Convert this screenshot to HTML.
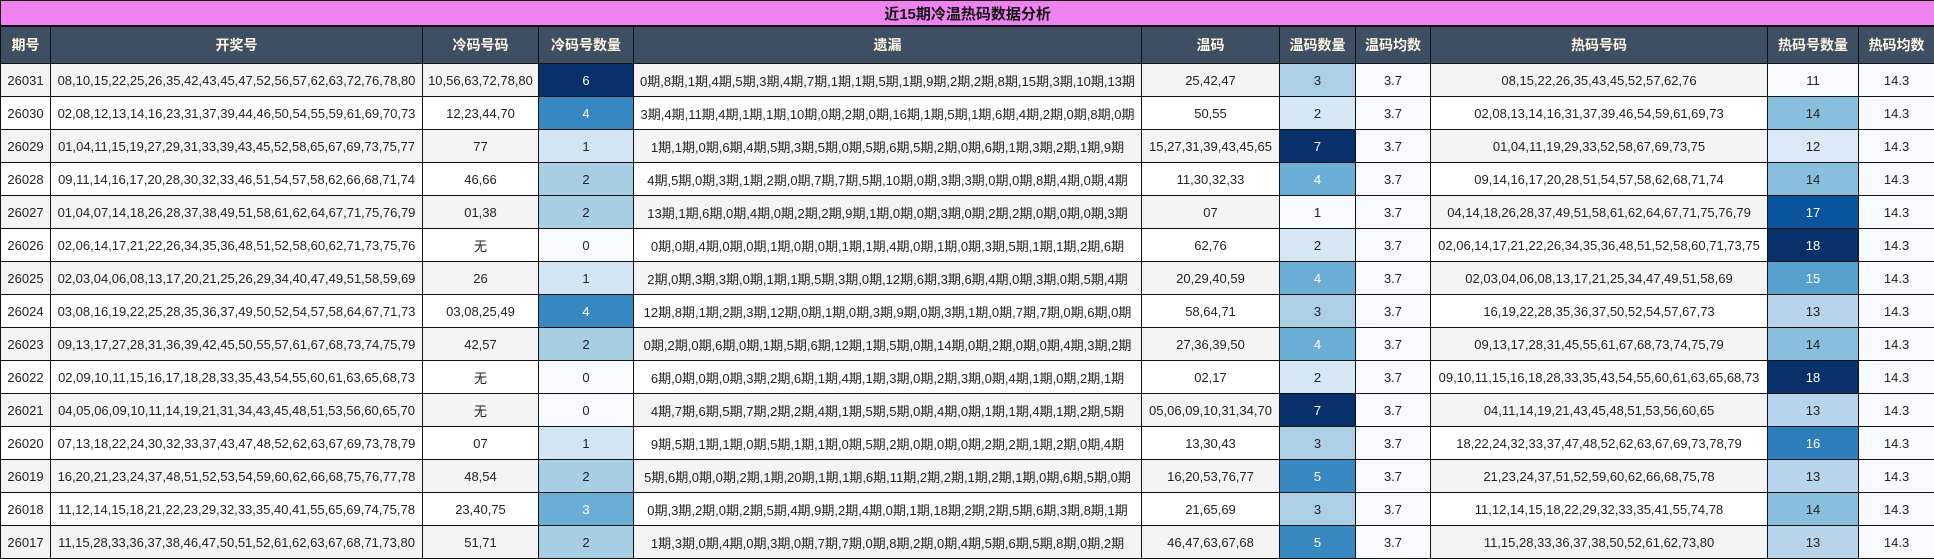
<!DOCTYPE html>
<html><head><meta charset="utf-8"><style>
html,body{margin:0;padding:0;background:#fff;}
table{border-collapse:collapse;table-layout:fixed;width:1934px;font-family:"Liberation Sans","Noto Sans CJK SC",sans-serif;font-size:13px;color:#222;}
td,th{border:1px solid #111;text-align:center;padding:0;white-space:nowrap;overflow:hidden;}
.t td{background:#ee82ee;height:24px;font-weight:bold;font-size:15px;color:#111;border-bottom:2px solid #111;}
.h th{background:#3f4f63;color:#fdf6e3;height:36px;font-size:14px;font-weight:bold;}
tr.r td{height:32px;}
tr.g td{background:#f4f4f4;}
tr.r td.a{background:#f7fbff;}
td.w{color:#fff !important;}
</style></head><body>
<table>
<colgroup><col style="width:50px"><col style="width:372px"><col style="width:116px"><col style="width:95px"><col style="width:508px"><col style="width:138px"><col style="width:76px"><col style="width:75px"><col style="width:337px"><col style="width:91px"><col style="width:76px"></colgroup>
<tr class="t"><td colspan="11">近15期冷温热码数据分析</td></tr>
<tr class="h"><th>期号</th><th>开奖号</th><th>冷码号码</th><th>冷码号数量</th><th>遗漏</th><th>温码</th><th>温码数量</th><th>温码均数</th><th>热码号码</th><th>热码号数量</th><th>热码均数</th></tr>
<tr class="r g"><td>26031</td><td>08,10,15,22,25,26,35,42,43,45,47,52,56,57,62,63,72,76,78,80</td><td>10,56,63,72,78,80</td><td class="w" style="background:#08306b">6</td><td>0期,8期,1期,4期,5期,3期,4期,7期,1期,1期,5期,1期,9期,2期,2期,8期,15期,3期,10期,13期</td><td>25,42,47</td><td style="background:#abd0e6">3</td><td class="a">3.7</td><td>08,15,22,26,35,43,45,52,57,62,76</td><td style="background:#f7fbff">11</td><td class="a">14.3</td></tr>
<tr class="r"><td>26030</td><td>02,08,12,13,14,16,23,31,37,39,44,46,50,54,55,59,61,69,70,73</td><td>12,23,44,70</td><td class="w" style="background:#3787c0">4</td><td>3期,4期,11期,4期,1期,1期,10期,0期,2期,0期,16期,1期,5期,1期,6期,4期,2期,0期,8期,0期</td><td>50,55</td><td style="background:#d6e6f4">2</td><td class="a">3.7</td><td>02,08,13,14,16,31,37,39,46,54,59,61,69,73</td><td style="background:#89bedc">14</td><td class="a">14.3</td></tr>
<tr class="r g"><td>26029</td><td>01,04,11,15,19,27,29,31,33,39,43,45,52,58,65,67,69,73,75,77</td><td>77</td><td style="background:#d3e4f3">1</td><td>1期,1期,0期,6期,4期,5期,3期,5期,0期,5期,6期,5期,2期,0期,6期,1期,3期,2期,1期,9期</td><td>15,27,31,39,43,45,65</td><td class="w" style="background:#08306b">7</td><td class="a">3.7</td><td>01,04,11,19,29,33,52,58,67,69,73,75</td><td style="background:#dbe9f6">12</td><td class="a">14.3</td></tr>
<tr class="r"><td>26028</td><td>09,11,14,16,17,20,28,30,32,33,46,51,54,57,58,62,66,68,71,74</td><td>46,66</td><td style="background:#a8cee4">2</td><td>4期,5期,0期,3期,1期,2期,0期,7期,7期,5期,10期,0期,3期,3期,0期,0期,8期,4期,0期,4期</td><td>11,30,32,33</td><td class="w" style="background:#6aaed6">4</td><td class="a">3.7</td><td>09,14,16,17,20,28,51,54,57,58,62,68,71,74</td><td style="background:#89bedc">14</td><td class="a">14.3</td></tr>
<tr class="r g"><td>26027</td><td>01,04,07,14,18,26,28,37,38,49,51,58,61,62,64,67,71,75,76,79</td><td>01,38</td><td style="background:#a8cee4">2</td><td>13期,1期,6期,0期,4期,0期,2期,2期,9期,1期,0期,0期,3期,0期,2期,2期,0期,0期,0期,3期</td><td>07</td><td style="background:#f7fbff">1</td><td class="a">3.7</td><td>04,14,18,26,28,37,49,51,58,61,62,64,67,71,75,76,79</td><td class="w" style="background:#0b559f">17</td><td class="a">14.3</td></tr>
<tr class="r"><td>26026</td><td>02,06,14,17,21,22,26,34,35,36,48,51,52,58,60,62,71,73,75,76</td><td>无</td><td style="background:#f7fbff">0</td><td>0期,0期,4期,0期,0期,1期,0期,0期,1期,1期,4期,0期,1期,0期,3期,5期,1期,1期,2期,6期</td><td>62,76</td><td style="background:#d6e6f4">2</td><td class="a">3.7</td><td>02,06,14,17,21,22,26,34,35,36,48,51,52,58,60,71,73,75</td><td class="w" style="background:#08306b">18</td><td class="a">14.3</td></tr>
<tr class="r g"><td>26025</td><td>02,03,04,06,08,13,17,20,21,25,26,29,34,40,47,49,51,58,59,69</td><td>26</td><td style="background:#d3e4f3">1</td><td>2期,0期,3期,3期,0期,1期,1期,5期,3期,0期,12期,6期,3期,6期,4期,0期,3期,0期,5期,4期</td><td>20,29,40,59</td><td class="w" style="background:#6aaed6">4</td><td class="a">3.7</td><td>02,03,04,06,08,13,17,21,25,34,47,49,51,58,69</td><td class="w" style="background:#58a1cf">15</td><td class="a">14.3</td></tr>
<tr class="r"><td>26024</td><td>03,08,16,19,22,25,28,35,36,37,49,50,52,54,57,58,64,67,71,73</td><td>03,08,25,49</td><td class="w" style="background:#3787c0">4</td><td>12期,8期,1期,2期,3期,12期,0期,1期,0期,3期,9期,0期,3期,1期,0期,7期,7期,0期,6期,0期</td><td>58,64,71</td><td style="background:#abd0e6">3</td><td class="a">3.7</td><td>16,19,22,28,35,36,37,50,52,54,57,67,73</td><td style="background:#b7d4ea">13</td><td class="a">14.3</td></tr>
<tr class="r g"><td>26023</td><td>09,13,17,27,28,31,36,39,42,45,50,55,57,61,67,68,73,74,75,79</td><td>42,57</td><td style="background:#a8cee4">2</td><td>0期,2期,0期,6期,0期,1期,5期,6期,12期,1期,5期,0期,14期,0期,2期,0期,0期,4期,3期,2期</td><td>27,36,39,50</td><td class="w" style="background:#6aaed6">4</td><td class="a">3.7</td><td>09,13,17,28,31,45,55,61,67,68,73,74,75,79</td><td style="background:#89bedc">14</td><td class="a">14.3</td></tr>
<tr class="r"><td>26022</td><td>02,09,10,11,15,16,17,18,28,33,35,43,54,55,60,61,63,65,68,73</td><td>无</td><td style="background:#f7fbff">0</td><td>6期,0期,0期,0期,3期,2期,6期,1期,4期,1期,3期,0期,2期,3期,0期,4期,1期,0期,2期,1期</td><td>02,17</td><td style="background:#d6e6f4">2</td><td class="a">3.7</td><td>09,10,11,15,16,18,28,33,35,43,54,55,60,61,63,65,68,73</td><td class="w" style="background:#08306b">18</td><td class="a">14.3</td></tr>
<tr class="r g"><td>26021</td><td>04,05,06,09,10,11,14,19,21,31,34,43,45,48,51,53,56,60,65,70</td><td>无</td><td style="background:#f7fbff">0</td><td>4期,7期,6期,5期,7期,2期,2期,4期,1期,5期,5期,0期,4期,0期,1期,1期,4期,1期,2期,5期</td><td>05,06,09,10,31,34,70</td><td class="w" style="background:#08306b">7</td><td class="a">3.7</td><td>04,11,14,19,21,43,45,48,51,53,56,60,65</td><td style="background:#b7d4ea">13</td><td class="a">14.3</td></tr>
<tr class="r"><td>26020</td><td>07,13,18,22,24,30,32,33,37,43,47,48,52,62,63,67,69,73,78,79</td><td>07</td><td style="background:#d3e4f3">1</td><td>9期,5期,1期,1期,0期,5期,1期,1期,0期,5期,2期,0期,0期,0期,2期,2期,1期,2期,0期,4期</td><td>13,30,43</td><td style="background:#abd0e6">3</td><td class="a">3.7</td><td>18,22,24,32,33,37,47,48,52,62,63,67,69,73,78,79</td><td class="w" style="background:#2f7ebc">16</td><td class="a">14.3</td></tr>
<tr class="r g"><td>26019</td><td>16,20,21,23,24,37,48,51,52,53,54,59,60,62,66,68,75,76,77,78</td><td>48,54</td><td style="background:#a8cee4">2</td><td>5期,6期,0期,0期,2期,1期,20期,1期,1期,6期,11期,2期,2期,1期,2期,1期,0期,6期,5期,0期</td><td>16,20,53,76,77</td><td class="w" style="background:#3787c0">5</td><td class="a">3.7</td><td>21,23,24,37,51,52,59,60,62,66,68,75,78</td><td style="background:#b7d4ea">13</td><td class="a">14.3</td></tr>
<tr class="r"><td>26018</td><td>11,12,14,15,18,21,22,23,29,32,33,35,40,41,55,65,69,74,75,78</td><td>23,40,75</td><td class="w" style="background:#6aaed6">3</td><td>0期,3期,2期,0期,2期,5期,4期,9期,2期,4期,0期,1期,18期,2期,2期,5期,6期,3期,8期,1期</td><td>21,65,69</td><td style="background:#abd0e6">3</td><td class="a">3.7</td><td>11,12,14,15,18,22,29,32,33,35,41,55,74,78</td><td style="background:#89bedc">14</td><td class="a">14.3</td></tr>
<tr class="r g"><td>26017</td><td>11,15,28,33,36,37,38,46,47,50,51,52,61,62,63,67,68,71,73,80</td><td>51,71</td><td style="background:#a8cee4">2</td><td>1期,3期,0期,4期,0期,3期,0期,7期,7期,0期,8期,2期,0期,4期,5期,6期,5期,8期,0期,2期</td><td>46,47,63,67,68</td><td class="w" style="background:#3787c0">5</td><td class="a">3.7</td><td>11,15,28,33,36,37,38,50,52,61,62,73,80</td><td style="background:#b7d4ea">13</td><td class="a">14.3</td></tr>
</table>
</body></html>
